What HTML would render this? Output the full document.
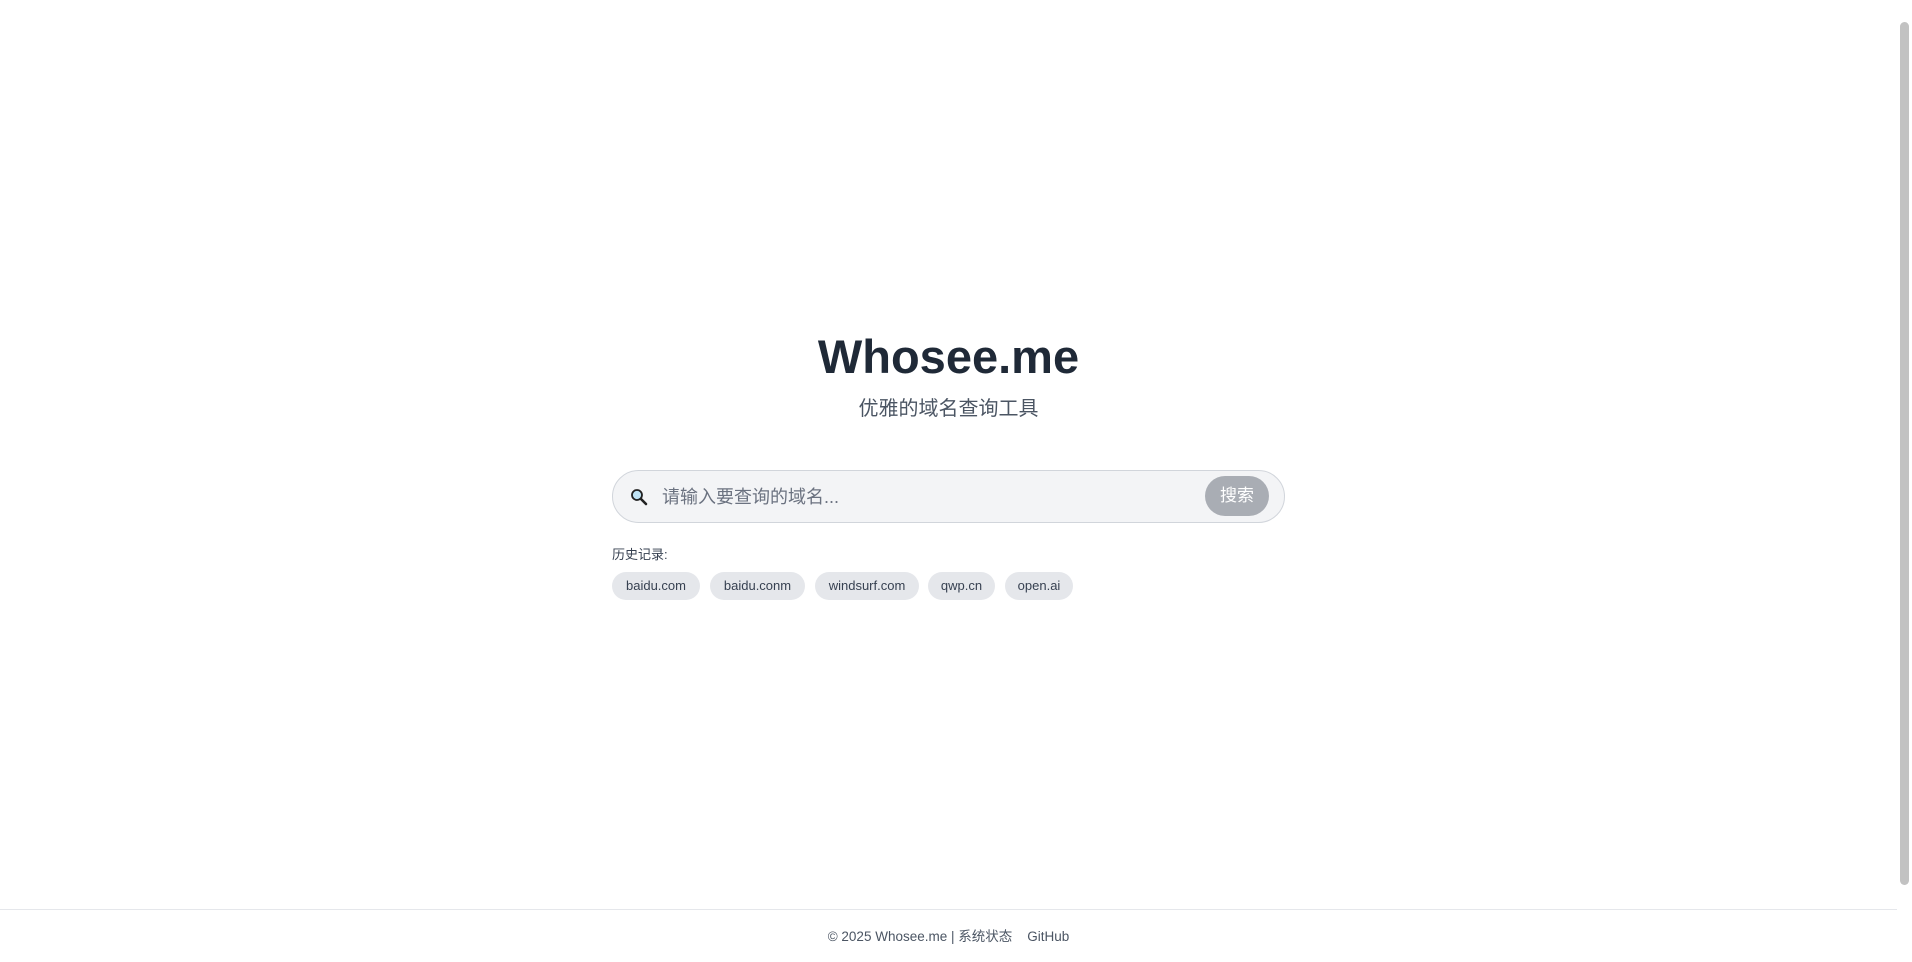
<!DOCTYPE html>
<html><head><meta charset="utf-8"><style>
html,body{margin:0;padding:0;width:1912px;height:962px;overflow:hidden;background:#fff;font-family:"Liberation Sans","Noto Sans CJK SC",sans-serif;}
.main{position:absolute;left:0;top:0;width:1897px;height:962px;}
h1{position:absolute;left:0;width:1897px;top:322px;margin:0;text-align:center;font-size:47px;font-weight:bold;color:#1f2937;line-height:70px;}
.sub{position:absolute;left:0;width:1897px;top:396px;text-align:center;font-size:20px;color:#4b5563;line-height:26px;}
.box{position:absolute;left:612px;top:470px;width:671px;height:51px;border:1px solid #d1d5db;border-radius:27px;background:#f3f4f6;}
.ph{position:absolute;left:49px;top:14px;font-size:18px;color:#6b7280;line-height:24px;}
.btn{position:absolute;left:592px;top:5px;width:64px;height:40px;border-radius:20px;background:#a9adb4;color:#fff;font-size:17px;text-align:center;line-height:40px;}
.hl{position:absolute;left:612px;top:544px;font-size:13px;color:#374151;}
.chip{position:absolute;top:572px;height:28px;line-height:28px;border-radius:14px;background:#e5e7eb;color:#374151;font-size:13px;text-align:center;}
.foot{position:absolute;left:0;top:909px;width:1897px;border-top:1px solid #e5e7eb;text-align:center;font-size:13.5px;color:#4b5563;padding-top:15px;}
.sb{position:absolute;left:1900px;top:22px;width:9px;height:863px;background:#c2c2c2;border-radius:5px;}
</style></head><body>
<div class="main">
<h1>Whosee.me</h1>
<div class="sub">优雅的域名查询工具</div>
<div class="box">
<svg style="position:absolute;left:17px;top:17px" width="18" height="18" viewBox="0 0 18 18"><circle cx="7" cy="7" r="5" fill="#bfe3f5" stroke="#222" stroke-width="1.8"/><line x1="11" y1="11" x2="16" y2="16" stroke="#222" stroke-width="2.6" stroke-linecap="round"/></svg>
<div class="ph">请输入要查询的域名...</div>
<div class="btn">搜索</div>
</div>
<div class="hl">历史记录:</div>
<div class="chip" style="left:612px;width:88px">baidu.com</div>
<div class="chip" style="left:710px;width:95px">baidu.conm</div>
<div class="chip" style="left:815px;width:104px">windsurf.com</div>
<div class="chip" style="left:928px;width:67px">qwp.cn</div>
<div class="chip" style="left:1005px;width:68px">open.ai</div>
<div class="foot">© 2025 Whosee.me | 系统状态 &nbsp;&nbsp; GitHub</div>
</div>
<div class="sb"></div>
</body></html>
